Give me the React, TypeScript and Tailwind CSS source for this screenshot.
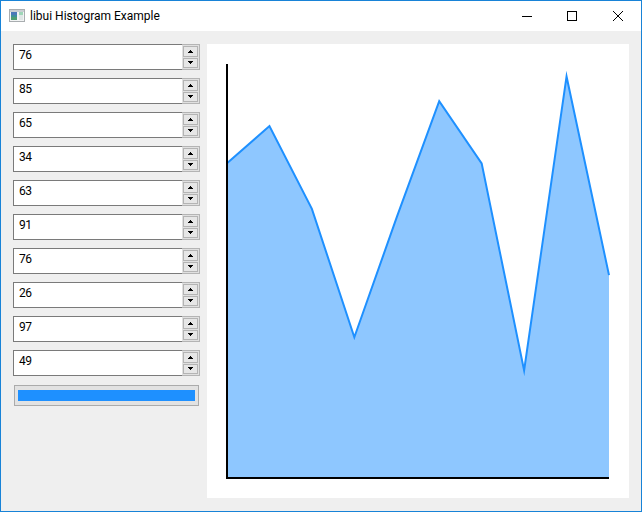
const values = [76, 85, 65, 34, 63, 91, 76, 26, 97, 49]

const graphTop = 20
const graphLeft = 20
const graphW = 382
const graphH = 414

const pts = values.map((v, i) => {
  const x = graphLeft + (i * graphW) / 9
  const y = graphTop + graphH - (v * graphH) / 100
  return `${x},${y}`
})

const AppIcon = () => (
  <svg width="16" height="16" viewBox="0 0 16 16" className="shrink-0">
    <rect x="0.5" y="1.5" width="15" height="12" fill="#f2f4f4" stroke="#a9adb0" />
    <rect x="1" y="2" width="14" height="2" fill="#c9ced2" />
    <rect x="2" y="4" width="6" height="8" fill="#3d8f9a" />
    <rect x="2" y="4" width="6" height="3" fill="#4a78b8" />
    <rect x="2" y="9" width="6" height="3" fill="#4e9d72" />
    <rect x="10" y="4" width="4" height="3" fill="#9ed6b8" />
    <rect x="10" y="7" width="4" height="5" fill="#dfe6e6" />
  </svg>
)

const Spinner = ({ value }: { value: number }) => (
  <div className="flex h-[26px] w-[187px]">
    <div className="flex-1 border border-r-0 border-[#7a7a7a] bg-white pl-[5px] pt-[2px] text-[12px] leading-[16px] tracking-[-0.6px] text-black">
      {value}
    </div>
    <div className="flex w-[18px] flex-col gap-[1px] border border-l-0 border-[#b4b4b4] bg-[#e0e0e0] p-[1px]">
      <div className="flex h-[11px] items-center justify-center border border-[#b4b4b4] bg-[#e6e6e6]">
        <svg width="7" height="4" viewBox="0 0 7 4" shapeRendering="crispEdges">
          <path d="M3 0h1v1h1v1h1v1H1V2h1V1h1z" fill="#000" />
        </svg>
      </div>
      <div className="flex h-[10px] items-center justify-center border border-[#b4b4b4] bg-[#e6e6e6]">
        <svg width="7" height="4" viewBox="0 0 7 4" shapeRendering="crispEdges">
          <path d="M1 0h5v1h-1v1h-1v1H3V2H2V1H1z" fill="#000" />
        </svg>
      </div>
    </div>
  </div>
)

export default function App() {
  return (
    <div
      className="flex h-[512px] w-[642px] flex-col border border-[#1883d7] bg-[#efefef]"
      style={{ fontFamily: 'Roboto, "Open Sans", sans-serif' }}
    >
      <div className="flex h-[30px] items-center bg-white pl-[8px]">
        <AppIcon />
        <span className="ml-[5px] text-[12px] text-black">libui Histogram Example</span>
        <div className="ml-auto flex h-full">
          <div className="flex w-[46px] items-center justify-center pl-[1px]">
            <svg width="10" height="10" viewBox="0 0 10 10">
              <path d="M0 5.5H10" stroke="#000" fill="none" />
            </svg>
          </div>
          <div className="flex w-[46px] items-center justify-center">
            <svg width="10" height="10" viewBox="0 0 10 10">
              <rect x="0.5" y="0.5" width="9" height="9" stroke="#000" fill="none" />
            </svg>
          </div>
          <div className="flex w-[46px] items-center justify-center">
            <svg width="10" height="10" viewBox="0 0 10 10">
              <path d="M0 0L10 10M10 0L0 10" stroke="#000" fill="none" />
            </svg>
          </div>
        </div>
      </div>

      <div className="flex flex-1 pl-[12px] pt-[13px]">
        <div className="flex w-[187px] flex-col gap-[8px]">
          {values.map((v, i) => (
            <Spinner key={i} value={v} />
          ))}
          <div className="mx-[1px] mt-[1px] flex h-[21px] items-center border border-[#ababab] bg-[#e2e2e2] px-[3px]">
            <div className="h-[11px] w-full bg-[#1e90ff]" />
          </div>
        </div>

        <div className="ml-[7px] h-[454px] w-[422px] bg-white">
          <svg width="422" height="454" viewBox="0 0 422 454">
            <polygon
              points={`${pts.join(" ")} ${graphLeft + graphW},${graphTop + graphH} ${graphLeft},${graphTop + graphH}`}
              fill="#1e90ff"
              fillOpacity="0.5"
            />
            <polyline points={pts.join(" ")} fill="none" stroke="#1e90ff" strokeWidth="2" strokeMiterlimit="10" />
            <polyline
              points={`${graphLeft},${graphTop} ${graphLeft},${graphTop + graphH} ${graphLeft + graphW},${graphTop + graphH}`}
              fill="none"
              stroke="#000"
              strokeWidth="2"
            />
          </svg>
        </div>
      </div>
    </div>
  )
}
